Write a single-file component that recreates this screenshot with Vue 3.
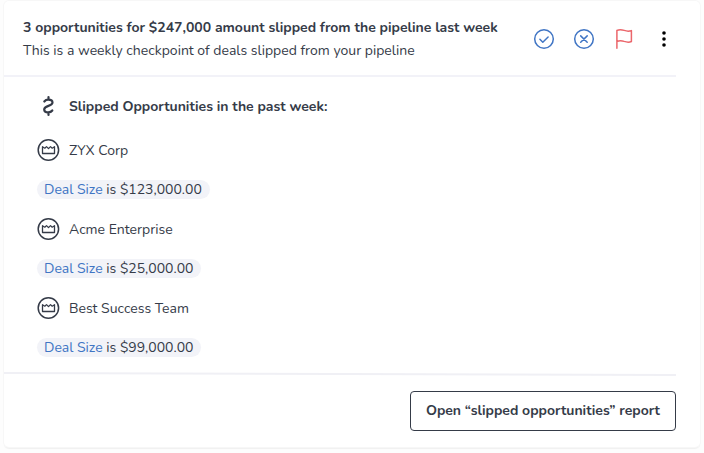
<script setup>
const deals = [
  { name: 'ZYX Corp', size: '$123,000.00' },
  { name: 'Acme Enterprise', size: '$25,000.00' },
  { name: 'Best Success Team', size: '$99,000.00' },
]
</script>

<template>
  <main class="page">
    <article class="card">
      <header class="head">
        <div class="titles">
          <h1 class="title">3 opportunities for $247,000 amount slipped from the pipeline last week</h1>
          <p class="subtitle">This is a weekly checkpoint of deals slipped from your pipeline</p>
        </div>
        <div class="actions">
          <button class="icon-btn blue" type="button" aria-label="Mark as done">
            <svg viewBox="0 0 24 24"><circle cx="12" cy="12" r="9.3" /><path d="M7.9 12.3l2.9 2.9 5.3-5.2" /></svg>
          </button>
          <button class="icon-btn blue" type="button" aria-label="Dismiss">
            <svg viewBox="0 0 24 24"><circle cx="12" cy="12" r="9.3" /><path d="M8.7 8.9l6.5 6.4M15.2 8.9l-6.5 6.4" /></svg>
          </button>
          <button class="icon-btn red" type="button" aria-label="Flag">
            <svg viewBox="0 0 24 24"><path d="M4.9 21.2V3.5C7.500 2.200 9.800 2.600 12.200 3.400c2.600.9 5 1 7.200.2V14.500c-2.200 1-4.600.8-7.200-.1-2.400-.9-4.900-1.100-7.300.1" /></svg>
          </button>
          <button class="icon-btn dots" type="button" aria-label="More options">
            <svg viewBox="0 0 24 24"><circle cx="12" cy="6" r="1.8" /><circle cx="12" cy="12" r="1.8" /><circle cx="12" cy="18" r="1.8" /></svg>
          </button>
        </div>
      </header>

      <section class="body">
        <h2 class="row heading">
          <svg class="row-icon dollar" viewBox="0 0 24 24" aria-hidden="true"><path d="M11.500 3v2.600M11.500 18.400V21M7.300 7.500C8.300 6.200 9.700 5.600 11.400 5.600c2.400 0 4.100 1.200 4.100 2.900 0 4-8.300 2.800-8.300 7 0 1.700 1.700 2.900 4 2.900 1.700 0 3.200-.6 4.100-1.900" /></svg>
          <span>Slipped Opportunities in the past week:</span>
        </h2>
        <ul class="deals">
          <li v-for="deal in deals" :key="deal.name" class="deal">
            <div class="row">
              <svg class="row-icon" viewBox="0 0 24 24" aria-hidden="true"><circle cx="11.400" cy="12" r="10.200" /><path class="crown" d="M5.500 15.500V8.700l2.300 1.500 1.700-1.600 2 2 2-2 1.700 1.600 2.300-1.500v6.800z" /></svg>
              <span>{{ deal.name }}</span>
            </div>
            <p class="pill"><a class="link" href="#">Deal Size</a> is {{ deal.size }}</p>
          </li>
        </ul>
      </section>

      <svg class="rule" viewBox="0 0 672 4" preserveAspectRatio="none" aria-hidden="true"><path d="M0 1L672 3" /></svg>

      <footer class="foot">
        <button class="report" type="button">Open “slipped opportunities” report</button>
      </footer>
    </article>
  </main>
</template>

<style>
body {
  background: #fdfdfd;
}
</style>

<style scoped>
.page {
  padding: 1px 4px 6px;
  color: #353b48;
  font: 14px/20px "Nunito", "Open Sans", sans-serif;
}
.card {
  padding-right: 24px;
  background: #fff;
  border-radius: 5px;
  box-shadow: 0 0 0 1px #f7f7f7, 0 2px 1px #f0f0f0;
}
.head {
  display: flex;
  justify-content: space-between;
  align-items: center;
  padding: 15px 0 13px 19px;
  border-bottom: 2px solid #f2f2f8;
}
.title,
.subtitle,
.heading,
.pill {
  margin: 0;
}
.title,
.subtitle {
  line-height: 23px;
  white-space: nowrap;
}
.title {
  font-size: 14px;
  font-weight: 700;
}
.actions {
  display: flex;
  gap: 16px;
}
.icon-btn {
  display: block;
  width: 24px;
  height: 24px;
  padding: 0;
  border: 0;
  background: none;
  cursor: pointer;
}
svg {
  display: block;
  fill: none;
  stroke: currentColor;
  stroke-width: 1.5;
  stroke-linecap: round;
  stroke-linejoin: round;
}
.blue {
  color: #4075c4;
}
.red {
  color: #eb666b;
}
.dots {
  color: #000;
}
.dots svg {
  fill: currentColor;
  stroke: none;
}
.body {
  padding: 17px 0 15px 33px;
}
.row {
  display: flex;
  align-items: center;
  gap: 8px;
  height: 24px;
  line-height: 21px;
}
.row-icon {
  width: 24px;
  height: 24px;
}
.crown {
  stroke-width: 1.3;
}
.dollar {
  stroke-width: 2.2;
}
.heading {
  font-size: 14px;
  font-weight: 700;
}
.deals {
  display: grid;
  gap: 18px;
  margin: 20px 0 0;
  padding: 0;
  list-style: none;
}
.pill {
  width: fit-content;
  margin-top: 18px;
  padding: 0 8px 0 7px;
  border-radius: 10px;
  background: #f2f3f8;
  line-height: 19px;
}
.link {
  color: #4075c4;
  text-decoration: none;
}
.rule {
  width: 100%;
  height: 4px;
  stroke: #f0f0f5;
  stroke-width: 2;
  stroke-linecap: butt;
}
.foot {
  display: flex;
  justify-content: flex-end;
  padding: 15px 0 16px;
}
.report {
  height: 40px;
  padding: 0 15px;
  border: 1px solid #353b48;
  border-radius: 4px;
  background: #fff;
  color: inherit;
  font: inherit;
  font-weight: 700;
  cursor: pointer;
}
</style>
